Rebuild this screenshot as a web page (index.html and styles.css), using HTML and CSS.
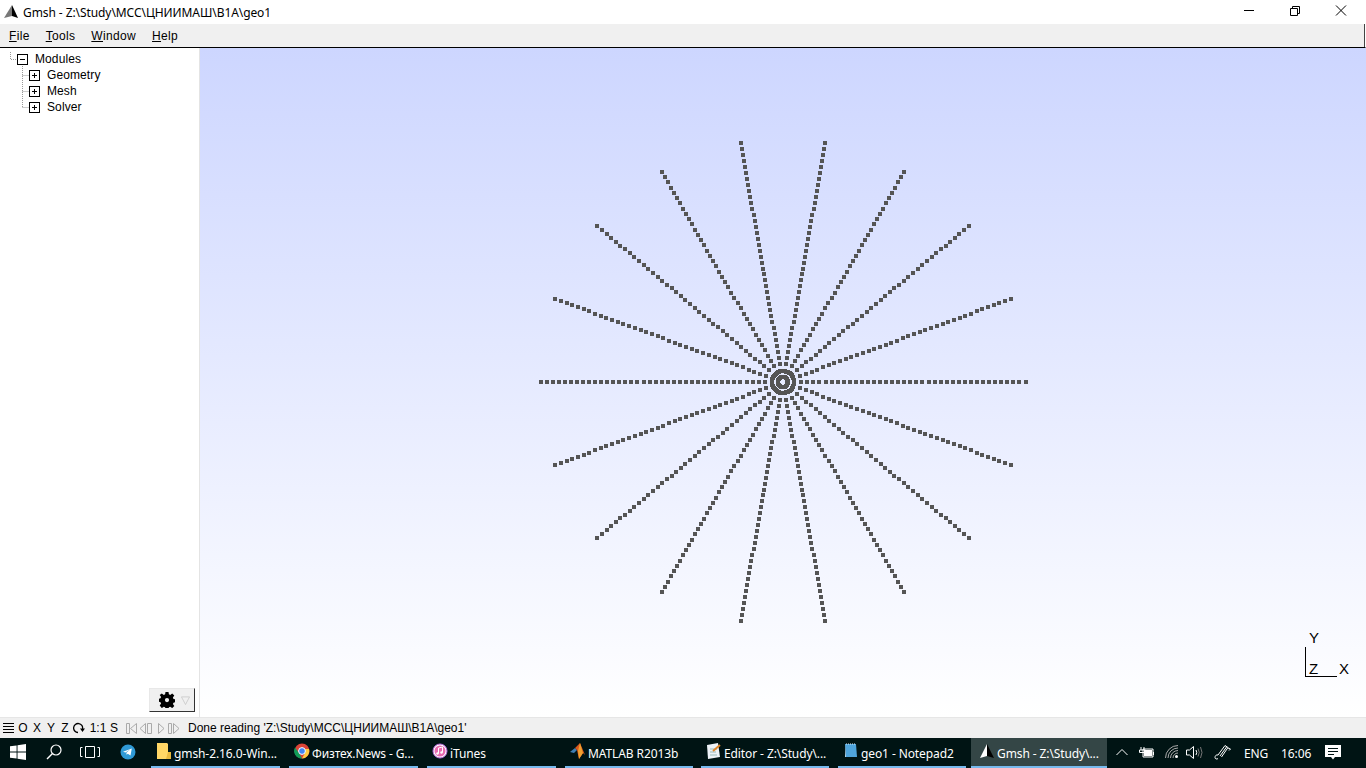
FILE: index.html
```html
<!DOCTYPE html>
<html lang="ru">
<head>
<meta charset="utf-8">
<title>Gmsh</title>
<link rel="stylesheet" href="styles.css">
</head>
<body>
<div class="window">
  <header class="titlebar">
    <svg class="app-icon" viewBox="0 0 16 16"><path d="M9 1 L15 14 L9 12Z" fill="#000"/><path d="M9 1 L9 12 L1 14Z" fill="#777"/></svg>
    <span class="title">Gmsh - Z:\Study\МСС\ЦНИИМАШ\В1А\geo1</span>
    <div class="controls">
      <svg class="ctl" viewBox="0 0 46 24"><path d="M18 10.5H28" stroke="#000" fill="none"/></svg>
      <svg class="ctl" viewBox="0 0 46 24"><path d="M18.5 8.5h7v7h-7zM20.5 8.5v-2h7v7h-2" stroke="#000" fill="none"/></svg>
      <svg class="ctl" viewBox="0 0 46 24"><path d="M18 5.5L28 15.5M28 5.5L18 15.5" stroke="#000" fill="none"/></svg>
    </div>
  </header>
  <nav class="menubar">
    <span class="menu"><u>F</u>ile</span>
    <span class="menu"><u>T</u>ools</span>
    <span class="menu"><u>W</u>indow</span>
    <span class="menu"><u>H</u>elp</span>
  </nav>
  <div class="main">
    <aside class="sidebar">
      <div class="tree">
        <svg class="tree-lines" viewBox="0 0 40 60"><path d="M10.5 0V7.500H17M22.500 12V55.500M22.500 23.500H29M22.500 39.500H29M22.500 55.500H29" stroke="#999" stroke-dasharray="1 1" fill="none"/></svg>
        <div class="node root"><span class="box minus"></span><span>Modules</span></div>
        <div class="node"><span class="box plus"></span><span>Geometry</span></div>
        <div class="node"><span class="box plus"></span><span>Mesh</span></div>
        <div class="node"><span class="box plus"></span><span>Solver</span></div>
      </div>
      <button class="gear-btn" type="button">
        <svg class="gear" viewBox="0 0 16 16"><path fill="#000" fill-rule="evenodd" d="M6.500 0h3l.4 2.300 1.300.6L13.200 1.500l2.100 2.100-1.400 2 .6 1.300 1.500.4v3l-1.500.4-.6 1.300 1.400 2-2.100 2.100-2-1.400-1.300.6-.4 1.500h-3l-.4-1.500-1.300-.6-2 1.400L.7 13.500l1.400-2-.6-1.300L0 9.700v-3l1.500-.4.6-1.300-1.400-2L2.800 1.500l2 1.400 1.300-.6zM8 6a2.100 2.100 0 1 0 0 4.200A2.100 2.100 0 0 0 8 6z"/></svg>
        <svg class="caret" viewBox="0 0 10 10"><path d="M.5 1h9L5 9.500z" fill="none" stroke="#ccc"/></svg>
      </button>
    </aside>
    <div class="canvas">
      <svg class="model" id="model" width="1166" height="669" viewBox="0 0 1166 669"></svg>
      <div class="axes">
        <span class="axis-y">Y</span>
        <span class="axis-z">Z</span>
        <span class="axis-x">X</span>
      </div>
    </div>
  </div>
  <footer class="statusbar">
    <svg class="hamb" viewBox="0 0 11 11"><path d="M0 .5h11M0 3.500h11M0 6.500h11M0 9.500h11" stroke="#000"/></svg>
    <span class="sb o">O</span><span class="sb">X</span><span class="sb">Y</span><span class="sb">Z</span>
    <svg class="rot" viewBox="0 0 12 12"><path d="M5 10.500A4.500 4.500 0 1 1 9.500 7" fill="none" stroke="#000" stroke-width="1.300"/><path d="M7 6.500h5L9.500 10z"/></svg>
    <span class="sb one">1:1</span><span class="sb s">S</span>
    <svg class="steps" viewBox="0 0 54 11"><g fill="none" stroke="#aaa"><path d="M.5.500h3v10h-3zM10.500.500v10L4.500 5.500z"/><path d="M19.500.500v10L14 5.500zM21.500.500h4v10h-4z"/><path d="M32.500.500v10L38 5.500z"/><path d="M42.500.500h3v10h-3zM47.500.500v10L53 5.500z"/></g></svg>
    <span class="message">Done reading 'Z:\Study\МСС\ЦНИИМАШ\В1А\geo1'</span>
  </footer>
</div>
<div class="taskbar">
  <div class="tray-left">
    <svg class="tb-win" viewBox="0 0 16 16"><path fill="#fff" d="M0 2.300 6.600 1.400V7.500H0zM7.500 1.300 16 0V7.500H7.500zM0 8.400H6.600V14.600L0 13.700zM7.500 8.400H16V16L7.500 14.700z"/></svg>
    <svg class="tb-search" viewBox="0 0 16 16"><circle cx="10" cy="6" r="5" fill="none" stroke="#fff" stroke-width="1.200"/><path d="M6.500 9.500 1 15" stroke="#fff" stroke-width="1.400"/></svg>
    <svg class="tb-view" viewBox="0 0 20 12"><path d="M5.500.500h9v11h-9zM2.500 1.500H.5v9h2M17.500 1.500h2v9h-2" fill="none" stroke="#fff"/></svg>
    <svg class="tb-tg" viewBox="0 0 16 16"><circle cx="8" cy="8" r="7.500" fill="#2f9ad6"/><path fill="#fff" d="M3 7.800 11.800 4.500 10.500 11.500 7.800 9.700 6.600 10.800 6.400 8.800 10.200 5.600 5.500 8.500z"/></svg>
  </div>
  <div class="task w129 first">
    <svg class="ti" viewBox="0 0 16 16"><path fill="#ffd766" d="M1 0h10l1 1v15H1z"/><path fill="#e8b93f" d="M12 9h3v7H10z"/></svg>
    <span>gmsh-2.16.0-Win...</span>
  </div>
  <div class="task w129">
    <svg class="ti" viewBox="0 0 16 16"><circle cx="8" cy="8" r="7.500" fill="#db4437"/><path fill="#0f9d58" d="M8 15.500A7.500 7.500 0 0 1 1 4.500L5 10z"/><path fill="#ffcd40" d="M8 15.500A7.500 7.500 0 0 0 15 6H8L11 10z"/><circle cx="8" cy="8" r="3.400" fill="#4285f4" stroke="#fff"/></svg>
    <span>Физтех.News - G...</span>
  </div>
  <div class="task w129">
    <svg class="ti" viewBox="0 0 16 16"><circle cx="8" cy="8" r="7" fill="#fff" stroke="#b565d8"/><circle cx="8" cy="8" r="5.500" fill="#e86bb0"/><path d="M6.500 10.500V5l4-1v5.500" stroke="#fff" fill="none"/><circle cx="5.500" cy="10.500" r="1.200" fill="#fff"/><circle cx="9.500" cy="9.500" r="1.200" fill="#fff"/></svg>
    <span>iTunes</span>
  </div>
  <div class="task w128">
    <svg class="ti" viewBox="0 0 16 16"><path fill="#3f7fb5" d="M0 9 5 5 7 7 4 10z"/><path fill="#d9571c" d="M5 5 10 0 15 12 13 10 9 16 7 7z"/><path fill="#f0a030" d="M10 0 8 8 9 16 13 10z"/></svg>
    <span>MATLAB R2013b</span>
  </div>
  <div class="task w128">
    <svg class="ti" viewBox="0 0 16 16"><path fill="#eef3f8" d="M1 2 12 0 14 14 2 16z"/><path d="M4 6h7M4 9h6M4 12h7" stroke="#9bb"/><path d="M7 8 14 2" stroke="#e0872a" stroke-width="2"/></svg>
    <span>Editor - Z:\Study\...</span>
  </div>
  <div class="task w128">
    <svg class="ti" viewBox="0 0 16 16"><path fill="#4fa5dc" d="M2 1h11l1 13H3z"/><path fill="#b9dcf2" d="M2 1l1 13H2z"/><path d="M3 1h10" stroke="#ddeaf3" stroke-dasharray="1 1"/></svg>
    <span>geo1 - Notepad2</span>
  </div>
  <div class="task active">
    <svg class="ti" viewBox="0 0 16 16"><path d="M8 1 15 15 8 13Z" fill="#000"/><path d="M8 1V13L1 15Z" fill="#fff"/></svg>
    <span>Gmsh - Z:\Study\...</span>
  </div>
  <div class="tray">
    <svg class="t chev" viewBox="0 0 12 8"><path d="M.5 7 6 1.500 11.500 7" fill="none" stroke="#fff"/></svg>
    <svg class="t bat" viewBox="0 0 16 12"><path d="M3 1v3M6 1v3M1.500 4h6v2.500h-6z" stroke="#fff" fill="none"/><path d="M5 3h10v8H5z" fill="#fff" fill-opacity=".1" stroke="#fff"/><path fill="#fff" d="M6 4h8v6H6zM15 6h1v3h-1z"/></svg>
    <svg class="t wifi" viewBox="0 0 14 14"><g fill="none" stroke="#aaa"><path d="M.5 13A12.500 12.500 0 0 1 13 .5"/><path d="M3 13A10 10 0 0 1 13 3" /><path d="M5.500 13A7.500 7.500 0 0 1 13 5.500"/><path d="M8 13A5 5 0 0 1 13 8"/></g><circle cx="11.500" cy="11.500" r="1.500" fill="#fff"/></svg>
    <svg class="t vol" viewBox="0 0 17 13"><path d="M.5 4h3L7.500.5v12L3.500 9h-3z" fill="none" stroke="#fff"/><path d="M10 4Q11.500 6.500 10 9" fill="none" stroke="#fff"/><path d="M12 2.500Q14.500 6.500 12 10.500M14.500 1Q17.500 6.500 14.500 12" fill="none" stroke="#777"/></svg>
    <svg class="t pen" viewBox="0 0 17 16"><path d="M4 11 11 1.500 14 3.500 7.500 13M6 12 12.500 3M14 4 16.500 5 15 6.500M4 11C2 10.500 1 12 1 13.500S3 15.500 4 14.500" fill="none" stroke="#fff"/></svg>
    <span class="lang">ENG</span>
    <span class="clock">16:06</span>
    <svg class="t note" viewBox="0 0 16 15"><path fill="#fff" d="M0 0h16v12H10L8 14.500 6 12H0z"/><path d="M3 3.500h10M3 6.500h10M3 9.500h6" stroke="#001414"/></svg>
  </div>
</div>
<script src="script.js"></script>
</body>
</html>
```

FILE: styles.css
```css
* { box-sizing: border-box; }
html, body { margin: 0; height: 100%; overflow: hidden; }
body { width: 1366px; height: 768px; display: flex; flex-direction: column; font-family: "Liberation Sans", Arial, sans-serif; font-size: 12px; color: #000; background: #fff; }
.window { flex: 0 0 738px; display: flex; flex-direction: column; height: 738px; }

.titlebar { flex: 0 0 24px; height: 24px; display: flex; align-items: center; background: #fff; padding-left: 3px; }
.app-icon { width: 16px; height: 16px; margin-right: 4px; }
.title { font-family: "Noto Sans", sans-serif; font-size: 12px; letter-spacing: -.08px; color: #000; }
.controls { margin-left: auto; display: flex; margin-right: 2px; }
.ctl { width: 46px; height: 24px; display: block; }

.menubar { flex: 0 0 24px; height: 24px; display: flex; align-items: center; background: #f0f0f0; border-bottom: 1px solid #000; border-right: 1px solid #fff; padding-left: 9px; gap: 16px; box-shadow: inset -1px 0 0 #444; }
.menu { font-size: 12px; letter-spacing: .33px; }

.main { flex: 1; display: flex; min-height: 0; }
.sidebar { flex: 0 0 200px; width: 200px; border-right: 1px solid #e4e4e4; background: #fff; display: flex; flex-direction: column; }
.tree { position: relative; padding: 3px 0 0 17px; color: #000; }
.tree-lines { position: absolute; left: 0; top: 4px; width: 40px; height: 60px; }
.node { position: relative; height: 16px; display: flex; align-items: center; margin-left: 12px; gap: 7px; line-height: 16px; letter-spacing: .1px; }
.node.root { margin-left: 0; gap: 7px; }
.box { width: 11px; height: 11px; border: 1px solid #000; background: #fff; position: relative; flex: none; }
.box::before { content: ""; position: absolute; left: 2px; top: 4px; width: 5px; height: 1px; background: #000; }
.plus::after { content: ""; position: absolute; left: 4px; top: 2px; width: 1px; height: 5px; background: #000; }
.gear-btn { margin: auto 4px 5px auto; width: 46px; height: 24px; padding: 0 0 0 9px; display: flex; align-items: center; gap: 6px; background: #f0f0f0; border: 0; border-right: 1px solid #333; border-bottom: 1px solid #333; border-top: 1px solid #e8e8e8; border-left: 1px solid #e8e8e8; }
.gear { width: 16px; height: 16px; }
.caret { width: 9px; height: 9px; }

.canvas { flex: 1; position: relative; background: linear-gradient(to bottom, #cdd6ff 0%, #ffffff 100%); }
.model { display: block; }
.axes { position: absolute; left: 1105px; top: 599px; width: 46px; height: 30px; border-left: 1px solid #000; border-bottom: 0; font-size: 15px; line-height: 15px; }
.axes::after { content: ""; position: absolute; left: 0; top: 29px; width: 31px; height: 1px; background: #000; }
.axis-y, .axis-z, .axis-x { position: absolute; }
.axis-y { left: 3px; top: -17px; }
.axis-z { left: 3px; top: 14px; }
.axis-x { left: 33px; top: 14px; }

.statusbar { flex: 0 0 21px; height: 21px; display: flex; align-items: center; background: #f0f0f0; padding-left: 3px; border-top: 1px solid #e6e6e6; }
.hamb { width: 11px; height: 11px; margin-right: 1px; }
.sb { width: 14px; text-align: center; flex: none; }
.sb.o { margin-left: 1px; }
.rot { width: 12px; height: 12px; margin: 0 3px 0 1px; }
.sb.one { width: 20px; }
.sb.s { width: 12px; }
.steps { width: 54px; height: 11px; margin-left: 6px; }
.message { margin-left: 8px; }

.taskbar { flex: 0 0 30px; height: 30px; background: #001414; display: flex; color: #fff; font-family: "Noto Sans", sans-serif; font-size: 12px; letter-spacing: -.1px; }
.tray-left { width: 151px; display: flex; align-items: center; padding-left: 10px; flex: none; padding-bottom: 2px; }
.tb-win { width: 16px; height: 16px; }
.tb-search { width: 16px; height: 16px; margin-left: 20px; }
.tb-view { width: 20px; height: 12px; margin-left: 18px; }
.tb-tg { width: 16px; height: 16px; margin-left: 20px; }
.task { flex: none; height: 30px; display: flex; align-items: center; gap: 2px; padding: 2px 0 0 5px; border-bottom: 2px solid #76b9ed; margin-right: 9px; white-space: nowrap; overflow: hidden; }
.task .ti { position: relative; top: -2px; }
.task.w129 { width: 129px; }
.task.w128 { width: 128px; margin-right: 8px; }
.task.w128 + .task.w128 { margin-right: 9px; }
.task.w128 + .task.w128 + .task.w128 { margin-right: 5px; }
.task.active { width: 136px; background: #344646; margin-right: 0; padding-left: 8px; }
.ti { width: 16px; height: 16px; flex: none; }
.tray { flex: 1; display: flex; align-items: center; padding-bottom: 2px; }
.t { flex: none; display: block; }
.chev { width: 12px; height: 8px; margin-left: 9px; }
.bat { width: 16px; height: 12px; margin-left: 10px; }
.wifi { width: 14px; height: 14px; margin-left: 11px; }
.vol { width: 17px; height: 13px; margin-left: 7px; }
.pen { width: 17px; height: 16px; margin-left: 11px; }
.lang { margin-left: 13px; width: 37px; position: relative; top: 1px; }
.clock { width: 44px; position: relative; top: 1px; }
.note { width: 16px; height: 15px; }
```

FILE: script.js
```js
// Draws the mesh points of the model: 18 radial lines and two small rings.
var svg = document.getElementById("model");
var NS = "http://www.w3.org/2000/svg";
var CX = 583, CY = 334;

function dot(x, y) {
  var r = document.createElementNS(NS, "rect");
  r.setAttribute("x", Math.round(x) - 2);
  r.setAttribute("y", Math.round(y) - 2);
  r.setAttribute("width", 4);
  r.setAttribute("height", 4);
  r.setAttribute("fill", "#555");
  svg.appendChild(r);
}

for (var a = 0; a < 18; a++) {
  var t = a * Math.PI / 9;
  for (var i = 0; i <= 37; i++) {
    var r = 242.5 - i * 6.06;
    dot(CX + r * Math.cos(t), CY + r * Math.sin(t));
  }
}
[5, 11].forEach(function (rad) {
  var n = Math.round(rad * 5);
  for (var k = 0; k < n; k++) {
    var u = k * 2 * Math.PI / n;
    dot(CX + rad * Math.cos(u), CY + rad * Math.sin(u));
  }
});
```
